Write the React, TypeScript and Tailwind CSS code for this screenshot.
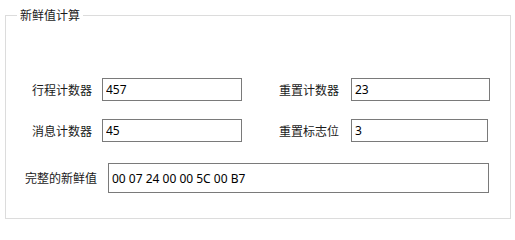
const font = { fontFamily: '"Noto Sans CJK SC", "Noto Sans", sans-serif' };

function Field({ value, width, tall = false }: { value: string; width: string; tall?: boolean }) {
  return (
    <input
      readOnly
      defaultValue={value}
      className={`${width} ${tall ? "h-[30px]" : "h-[23px]"} border border-[#7a7a7a] bg-white px-[3px] font-['Noto_Sans',sans-serif] text-[12px] text-black outline-none`}
    />
  );
}

export default function App() {
  return (
    <div
      className="h-[225px] w-[515px] bg-white pt-[7px] pl-[5px] text-[12px] text-[#1a1a1a]"
      style={font}
    >
      <fieldset className="m-0 h-[212px] w-[506px] border border-[#dcdcdc] p-0">
        <legend className="ml-[11px] px-[3px] text-[12px] leading-[16px]">新鲜值计算</legend>

        <div className="mt-[55px] flex items-center">
          <span className="w-[86px] text-right">行程计数器</span>
          <Field value="457" width="ml-[10px] w-[140px]" />
          <span className="ml-[11px] w-[86px] text-right">重置计数器</span>
          <Field value="23" width="ml-[12px] w-[139px]" />
        </div>

        <div className="mt-[18px] flex items-center">
          <span className="w-[86px] text-right">消息计数器</span>
          <Field value="45" width="ml-[10px] w-[140px]" />
          <span className="ml-[11px] w-[86px] text-right">重置标志位</span>
          <Field value="3" width="ml-[12px] w-[137px]" />
        </div>

        <div className="mt-[21px] flex items-center">
          <span className="w-[91px] text-right">完整的新鲜值</span>
          <Field value="00 07 24 00 00 5C 00 B7" width="ml-[11px] w-[381px]" tall />
        </div>
      </fieldset>
    </div>
  );
}
